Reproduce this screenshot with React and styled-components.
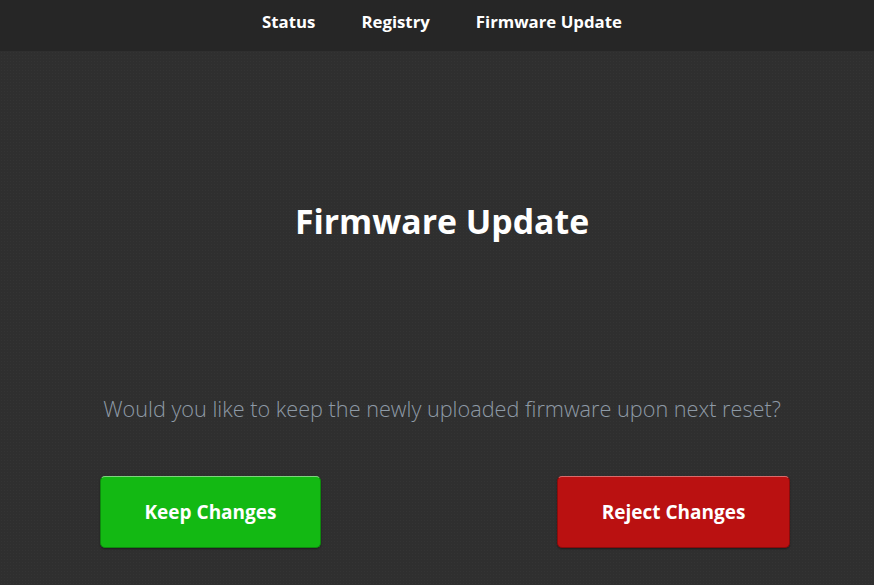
import React from 'react';
import styled, { createGlobalStyle } from 'styled-components';

const GlobalStyle = createGlobalStyle`
  html, body {
    margin: 0;
    padding: 0;
    background: #2f2f2f;
  }
  body {
    font-family: "Open Sans", "Liberation Sans", sans-serif;
    color: #fff;
  }
`;

const Page = styled.div`
  min-height: 585px;
  background-color: #2f2f2f;
  background-image: radial-gradient(rgba(255, 255, 255, 0.025) 1px, transparent 1px);
  background-size: 3px 3px;
`;

const NavBar = styled.nav`
  height: 51px;
  background: #262626;
  display: flex;
  justify-content: center;
  align-items: center;
  gap: 46px;
  padding-left: 10px;
  box-sizing: border-box;
`;

const NavLink = styled.a`
  color: #fff;
  font-size: 16.8px;
  font-weight: 700;
  text-decoration: none;
  cursor: pointer;
  margin-top: -8px;
`;

const Main = styled.main`
  padding: 0 84px 0 100px;
  display: flex;
  flex-direction: column;
`;

const Title = styled.h1`
  margin: 148px 0 0;
  font-size: 33.8px;
  font-weight: 700;
  line-height: 44px;
  text-align: center;
  transform: translateX(-3px);
`;

const Question = styled.p`
  margin: 151px 0 0;
  font-size: 21.66px;
  font-weight: 300;
  line-height: 30px;
  color: #8e9aa6;
  text-align: center;
  transform: translateX(-3px);
`;

const Actions = styled.div`
  margin-top: 52px;
  display: flex;
  justify-content: space-between;
`;

const Button = styled.button`
  width: ${p => p.$width}px;
  height: 72px;
  border: 1px solid ${p => p.$edge};
  border-top-color: ${p => p.$top};
  border-radius: 5px;
  background: ${p => p.$bg};
  color: #fff;
  font-family: "Open Sans", "Liberation Sans", sans-serif;
  font-size: 19px;
  font-weight: 700;
  cursor: pointer;
  box-shadow: 0 1px 2px rgba(0, 0, 0, 0.4);
`;

export default function App() {
  return (
    <>
      <GlobalStyle />
      <Page>
        <NavBar>
          <NavLink>Status</NavLink>
          <NavLink>Registry</NavLink>
          <NavLink>Firmware Update</NavLink>
        </NavBar>
        <Main>
          <Title>Firmware Update</Title>
          <Question>Would you like to keep the newly uploaded firmware upon next reset?</Question>
          <Actions>
            <Button $width={221} $bg="#13b913" $edge="#0e8a0e" $top="#7fd47f">Keep Changes</Button>
            <Button $width={233} $bg="#ba1111" $edge="#8a0c0c" $top="#d86b6b">Reject Changes</Button>
          </Actions>
        </Main>
      </Page>
    </>
  );
}
